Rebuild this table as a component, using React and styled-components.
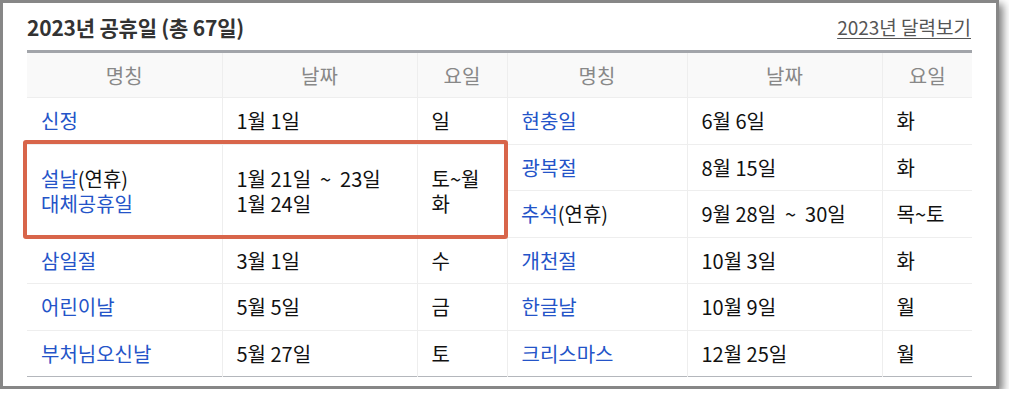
import styled, { createGlobalStyle } from "styled-components";

const GlobalStyle = createGlobalStyle`
  body {
    margin: 0;
    background: #ffffff;
    font-family: "Noto Sans CJK KR", "Noto Sans", sans-serif;
  }
`;

const left = [
  { names: [["신정"]], dates: ["1월 1일"], days: ["일"] },
  {
    names: [["설날", "(연휴)"], ["대체공휴일"]],
    dates: ["1월 21일  ~  23일", "1월 24일"],
    days: ["토~월", "화"],
    span: 2,
  },
  null,
  { names: [["삼일절"]], dates: ["3월 1일"], days: ["수"] },
  { names: [["어린이날"]], dates: ["5월 5일"], days: ["금"] },
  { names: [["부처님오신날"]], dates: ["5월 27일"], days: ["토"] },
];

const right = [
  { names: [["현충일"]], dates: ["6월 6일"], days: ["화"] },
  { names: [["광복절"]], dates: ["8월 15일"], days: ["화"] },
  { names: [["추석", "(연휴)"]], dates: ["9월 28일  ~  30일"], days: ["목~토"] },
  { names: [["개천절"]], dates: ["10월 3일"], days: ["화"] },
  { names: [["한글날"]], dates: ["10월 9일"], days: ["월"] },
  { names: [["크리스마스"]], dates: ["12월 25일"], days: ["월"] },
];

function Cells({ item }) {
  if (!item) return null;
  return (
    <>
      <Td rowSpan={item.span}>
        {item.names.map(([name, extra], i) => (
          <Line key={i}>
            <Name>{name}</Name>
            {extra}
          </Line>
        ))}
      </Td>
      <Td rowSpan={item.span}>
        {item.dates.map((d, i) => (
          <Line key={i}>{d}</Line>
        ))}
      </Td>
      <Td rowSpan={item.span}>
        {item.days.map((d, i) => (
          <Line key={i}>{d}</Line>
        ))}
      </Td>
    </>
  );
}

export default function App() {
  return (
    <>
      <GlobalStyle />
      <Frame>
        <Header>
          <Title>2023년 공휴일 (총 67일)</Title>
          <CalendarLink href="#">2023년 달력보기</CalendarLink>
        </Header>
        <TableWrap>
          <Table>
            <colgroup>
              <col width="195" />
              <col width="195" />
              <col width="90" />
              <col width="180" />
              <col width="195" />
              <col width="90" />
            </colgroup>
            <thead>
              <tr>
                <Th>명칭</Th>
                <Th>날짜</Th>
                <Th>요일</Th>
                <Th>명칭</Th>
                <Th>날짜</Th>
                <Th>요일</Th>
              </tr>
            </thead>
            <tbody>
              {right.map((r, i) => (
                <Row key={i}>
                  <Cells item={left[i]} />
                  <Cells item={r} />
                </Row>
              ))}
            </tbody>
          </Table>
          <Highlight />
        </TableWrap>
      </Frame>
    </>
  );
}

const Frame = styled.div`
  box-sizing: border-box;
  width: 999px;
  height: 389px;
  border: 3px solid #878787;
  padding: 0 24px;
  background: #ffffff;
  box-shadow: 4px 4px 8px rgba(0, 0, 0, 0.5);
`;

const Header = styled.div`
  height: 47px;
  display: flex;
  align-items: center;
  justify-content: space-between;
`;

const Title = styled.h2`
  margin: 0;
  font-size: 21px;
  font-weight: 700;
  color: #333333;
  letter-spacing: -0.2px;
`;

const CalendarLink = styled.a`
  font-size: 19px;
  color: #555555;
  text-decoration: underline;
  text-underline-offset: 3px;
  margin-right: 1px;
`;

const TableWrap = styled.div`
  position: relative;
`;

const Table = styled.table`
  width: 945px;
  table-layout: fixed;
  border-collapse: collapse;
  border-top: 3px solid #a2a5aa;
  border-bottom: 1px solid #b4b7bc;
  font-size: 20px;
`;

const Th = styled.th`
  height: 44px;
  padding: 0;
  background: #f9f9f9;
  color: #888888;
  font-weight: 400;
  text-align: center;
  border-bottom: 1px solid #eeeeee;
  border-left: 1px solid #eeeeee;
  &:first-child {
    border-left: none;
  }
`;

const Row = styled.tr`
  height: 46.5px;
`;

const Td = styled.td`
  padding: 0 14px;
  color: #111111;
  vertical-align: middle;
  border-top: 1px solid #eeeeee;
  border-left: 1px solid #eeeeee;
  &:first-child {
    border-left: none;
  }
`;

const Line = styled.div`
  line-height: 25px;
  white-space: pre;
`;

const Name = styled.span`
  color: #2454c8;
`;

const Highlight = styled.div`
  position: absolute;
  left: -4px;
  top: 90px;
  width: 485px;
  height: 99px;
  box-sizing: border-box;
  border: 4px solid #d8654a;
  border-radius: 3px;
  pointer-events: none;
`;
